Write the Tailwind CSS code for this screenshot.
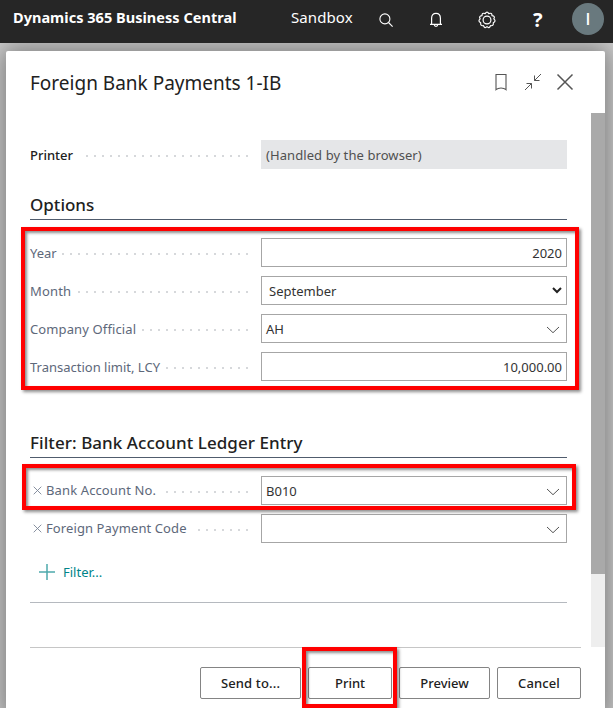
<!DOCTYPE html>
<html lang="en">
<head>
<meta charset="utf-8">
<title>Foreign Bank Payments 1-IB</title>
<script src="https://cdn.jsdelivr.net/npm/@tailwindcss/browser@4"></script>
</head>
<body class="relative h-[708px] w-[613px] overflow-hidden bg-[#cecece] font-['Noto_Sans',sans-serif] text-[13px] leading-[18px] text-[#212121]">
<svg class="absolute h-0 w-0">
  <symbol id="chev" viewBox="0 0 14 8"><path d="M1 1l6 5.7L13 1" fill="none" stroke="#555" stroke-width="1"/></symbol>
  <symbol id="rm" viewBox="0 0 9 9"><path d="M.7.7l7.6 7.6M8.3.7L.7 8.3" fill="none" stroke="#7a8495" stroke-width=".9"/></symbol>
  <pattern id="dots" width="8" height="2" patternUnits="userSpaceOnUse"><rect width="2" height="2" fill="#d6d8db"/></pattern>
</svg>

<header class="relative z-10 flex h-[43px] items-start bg-[#262626] text-white">
  <div class="ml-[13px] mt-[8px] w-[278px] whitespace-nowrap text-[14.500px] font-bold tracking-[0.03px]">Dynamics 365 Business Central</div>
  <div class="mt-[8px] w-[87px] text-[15px] tracking-[0.1px]">Sandbox</div>
  <svg class="mt-[12px] h-4 w-4" viewBox="0 0 16 16" fill="none" stroke="#fff" stroke-width="1.1"><circle cx="6.9" cy="6.900" r="5"/><path d="M10.5 10.5L14.6 14.6"/></svg>
  <svg class="ml-[34px] mt-[12px] h-4 w-4" viewBox="0 0 16 16" fill="none" stroke="#fff" stroke-width="1.2"><path d="M2 12.300h12M3.600 12.300V6.200C3.600 3 5.200 1.300 8 1.300s4.400 1.700 4.400 4.900v6.100M6.200 12.500c.2 2.400 3.400 2.400 3.600 0"/></svg>
  <svg class="ml-[34px] mt-[11px] h-[18px] w-[18px]" viewBox="0 0 18 18" fill="none" stroke="#fff" stroke-width="1.2"><path stroke-linejoin="round" d="M7.200 2.600Q9 -.4 10.800 2.600Q14.200 1.400 14 4.600Q17.600 5.300 15.800 7.900Q18.500 10.200 15.300 11.700Q15.900 15.200 12.500 14.700Q11.200 18 9 15.700Q6.800 18 5.500 14.700Q2.100 15.200 2.700 11.700Q-.5 10.200 2.200 7.900Q.4 5.300 4 4.600Q3.800 1.400 7.200 2.600z"/><circle cx="9" cy="9" r="3.900"/></svg>
  <div class="ml-[37px] mt-[9px] w-[10px] text-[20px] font-bold leading-[22px]">?</div>
  <div class="ml-[29px] mt-[3px] flex h-8 w-8 items-center justify-center rounded-full bg-[#69797e] font-['Open_Sans',sans-serif] text-[16px] font-semibold">I</div>
</header>

<main class="ml-[6px] mt-[8px] flex h-[665px] w-[599px] flex-col rounded-t-[2px] bg-white shadow-[0_0_24px_4px_rgba(0,0,0,0.4)]">
  <div class="flex h-[62px] shrink-0 items-start pl-[24px]">
    <h1 class="mt-[20px] w-[465px] whitespace-nowrap text-[19px] leading-[24px]">Foreign Bank Payments 1-IB</h1>
    <svg class="mt-[22px] h-[18px] w-[12px]" viewBox="0 0 12 18" fill="none" stroke="#555" stroke-width="1.100"><path d="M1 1.500h10v15.200C8.500 14.500 3.500 14.500 1 16.700z"/></svg>
    <svg class="ml-[17px] mt-[22px] h-[18px] w-[18px]" viewBox="0 0 18 18" fill="none" stroke="#555" stroke-width="1"><path d="M17 1L10.500 7.500M10.500 2.500v5h5M1 17l6.500-6.500M2.500 10.500h5v5"/></svg>
    <svg class="ml-[14px] mt-[22px] h-[18px] w-[18px]" viewBox="0 0 18 18" fill="none" stroke="#555" stroke-width="1.500"><path d="M1.500 1.500l15 15M16.500 1.500l-15 15"/></svg>
  </div>

  <div class="flex h-[534px] shrink-0 justify-between">
    <div class="ml-[24px] w-[537px] pt-[27px]">
      <div class="flex h-[29px] items-center">
        <div class="w-[56px] font-medium">Printer</div><svg class="mt-[2px] h-[2px] w-[175px]"><rect width="162" height="2" fill="url(#dots)"/></svg>
        <div class="flex h-[29px] w-[306px] items-center bg-[#e5e6e8] pl-[5px] tracking-[0.08px] text-[#505050]">(Handled by the browser)</div>
      </div>
      <h2 class="mt-[22px] h-[29px] border-b border-[#505c6d] pt-[2px] text-[17px] font-medium leading-[24px]">Options</h2>
      <div class="mt-[18px] flex flex-col gap-[9px] text-[#5d687a]">
        <div class="flex h-[29px] items-center"><div class="w-[32px]">Year</div><svg class="mt-[2px] h-[2px] w-[199px]"><rect width="186" height="2" fill="url(#dots)"/></svg>
          <div class="flex h-[29px] w-[306px] items-center justify-end border border-[#a6a6a6] pr-[4px] text-[#333]">2020</div></div>
        <div class="flex h-[29px] items-center"><div class="w-[48px] tracking-[0.15px]">Month</div><svg class="mt-[2px] h-[2px] w-[183px]"><rect width="170" height="2" fill="url(#dots)"/></svg>
          <div class="flex h-[29px] w-[306px] items-center justify-between border border-[#a6a6a6] pl-[7px] pr-[4px] text-[#333]">September<svg class="h-[7px] w-[10px]" viewBox="0 0 10 7" fill="none" stroke="#222" stroke-width="2"><path d="M1 1l4 4 4-4"/></svg></div></div>
        <div class="flex h-[29px] items-center"><div class="w-[112px] tracking-[0.12px]">Company Official</div><svg class="mt-[2px] h-[2px] w-[119px]"><rect width="106" height="2" fill="url(#dots)"/></svg>
          <div class="flex h-[29px] w-[306px] items-center justify-between border border-[#a6a6a6] pl-[4px] pr-[6px] text-[#333]">AH<svg class="mt-[2px] h-[8px] w-[14px]"><use href="#chev"/></svg></div></div>
        <div class="flex h-[29px] items-center"><div class="w-[136px]">Transaction limit, LCY</div><svg class="mt-[2px] h-[2px] w-[95px]"><rect width="82" height="2" fill="url(#dots)"/></svg>
          <div class="flex h-[29px] w-[306px] items-center justify-end border border-[#a6a6a6] pr-[4px] text-[#333]">10,000.00</div></div>
      </div>
      <h2 class="mt-[47px] h-[30px] border-b border-[#505c6d] pt-[3px] text-[17px] font-medium leading-[24px] tracking-[0.06px]">Filter: Bank Account Ledger Entry</h2>
      <div class="mt-[18px] flex flex-col gap-[9px] text-[#5d687a]">
        <div class="flex h-[29px] items-center"><svg class="ml-[3px] mr-[4px] h-[9px] w-[9px]"><use href="#rm"/></svg><div class="w-[120px] pb-[2px] tracking-[0.12px]">Bank Account No.</div><svg class="mt-[2px] h-[2px] w-[95px]"><rect width="82" height="2" fill="url(#dots)"/></svg>
          <div class="flex h-[29px] w-[306px] items-center justify-between border border-[#a6a6a6] pl-[4px] pr-[6px] text-[#333]">B010<svg class="mt-[2px] h-[8px] w-[14px]"><use href="#chev"/></svg></div></div>
        <div class="flex h-[29px] items-center"><svg class="ml-[3px] mr-[4px] h-[9px] w-[9px]"><use href="#rm"/></svg><div class="w-[152px] pb-[2px] tracking-[0.1px]">Foreign Payment Code</div><svg class="mt-[2px] h-[2px] w-[63px]"><rect width="50" height="2" fill="url(#dots)"/></svg>
          <div class="flex h-[29px] w-[306px] items-center justify-end border border-[#a6a6a6] pr-[6px]"><svg class="mt-[2px] h-[8px] w-[14px]"><use href="#chev"/></svg></div></div>
      </div>
      <div class="mt-[20px] flex h-[18px] items-center text-[#008489]"><svg class="ml-[9px] mr-[8px] h-4 w-4" viewBox="0 0 16 16"><path d="M8 0v16M0 8h16" fill="none" stroke="#4da9ac" stroke-width="1.500"/></svg>Filter...</div>
      <div class="mt-[21px] h-px bg-[#b5b9bf]"></div>
    </div>
    <div class="w-[14px] bg-[#eeeeee]"><div class="h-[461px] bg-[#a9a9a9]"></div></div>
  </div>

  <footer class="ml-[24px] flex h-[61px] w-[551px] justify-end gap-[7px] border-t border-[#c6c6c6] pt-[19px] font-medium">
    <button class="h-[32px] w-[101px] rounded-[2px] border border-[#848484] tracking-[0.15px]">Send to...</button>
    <button class="h-[32px] w-[84px] rounded-[2px] border border-[#848484]">Print</button>
    <button class="h-[32px] w-[91px] rounded-[2px] border border-[#848484]">Preview</button>
    <button class="h-[32px] w-[84px] rounded-[2px] border border-[#848484] tracking-[0.1px]">Cancel</button>
  </footer>
</main>

<div class="absolute left-[21px] top-[227px] z-20 h-[163px] w-[558px] border-4 border-[#ff0000] shadow-[2px_2px_3px_0px_rgba(0,0,0,0.45),inset_2px_2px_3px_0px_rgba(0,0,0,0.45)]"></div>
<div class="absolute left-[22px] top-[464px] z-20 h-[46px] w-[554px] border-4 border-[#ff0000] shadow-[2px_2px_3px_0px_rgba(0,0,0,0.45),inset_2px_2px_3px_0px_rgba(0,0,0,0.45)]"></div>
<div class="absolute left-[302px] top-[647px] z-20 h-[61px] w-[95px] border-4 border-[#ff0000] shadow-[2px_2px_3px_0px_rgba(0,0,0,0.45),inset_2px_2px_3px_0px_rgba(0,0,0,0.45)]"></div>
</body>
</html>
